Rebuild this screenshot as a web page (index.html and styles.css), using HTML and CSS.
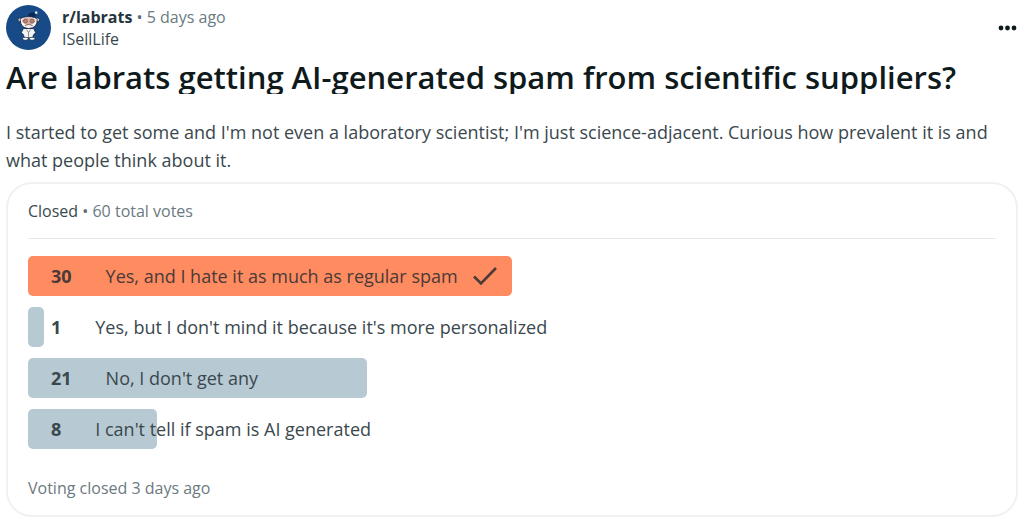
FILE: index.html
```html
<!DOCTYPE html>
<html lang="en">
<head>
<meta charset="utf-8">
<meta name="viewport" content="width=device-width, initial-scale=1">
<title>r/labrats poll</title>
<link rel="stylesheet" href="styles.css">
</head>
<body>
<article class="post">
  <header class="post-header">
    <svg class="avatar" viewBox="0 0 44 44" aria-hidden="true">
      <circle cx="22" cy="22" r="22" fill="#174a86"/>
      <path d="M21 11 C22 7 27 6 30 8 L28 12 Z" fill="#0d2a55"/>
      <circle cx="29.500" cy="7.500" r="1.300" fill="#dfe8f2"/>
      <circle cx="13.500" cy="14.500" r="1.800" fill="#d9d5d2" stroke="#14253f" stroke-width=".7"/>
      <circle cx="31" cy="14.500" r="1.800" fill="#d9d5d2" stroke="#14253f" stroke-width=".7"/>
      <path d="M17 23 L27 23 L29 27 L27 29 L26 32 L18 32 L17 29 L15 27 Z" fill="#f4f4f4" stroke="#14253f" stroke-width=".8"/>
      <ellipse cx="19" cy="33" rx="2.800" ry="1.400" fill="#fff" stroke="#14253f" stroke-width=".6"/>
      <ellipse cx="25.500" cy="33" rx="2.800" ry="1.400" fill="#fff" stroke="#14253f" stroke-width=".6"/>
      <path d="M20 24 L22 27 L24 24 M22 27 V31" fill="none" stroke="#777e88" stroke-width=".9"/>
      <path d="M14 14 Q15 11.500 22 11.500 Q29 11.500 30.500 14 Q31 22.500 22.200 23 Q13.500 22.500 14 14 Z" fill="#f5f2ef" stroke="#14253f" stroke-width=".8"/>
      <ellipse cx="22.200" cy="15.500" rx="6.600" ry="3.200" fill="#d9ada0"/>
      <circle cx="19" cy="15.800" r="1.900" fill="#c58478" stroke="#6e5a58" stroke-width=".8"/>
      <circle cx="25.500" cy="15.800" r="1.900" fill="#c58478" stroke="#6e5a58" stroke-width=".8"/>
      <path d="M18.500 20.300 Q22 18 26 20.300" fill="none" stroke="#8d6f6a" stroke-width="1"/>
    </svg>
    <div class="byline">
      <div><a class="community" href="#">r/labrats</a> <span class="dot">•</span> <time class="muted">5 days ago</time></div>
      <a class="author" href="#">ISellLife</a>
    </div>
    <button class="more" type="button" aria-label="More options">
      <svg class="more-icon" viewBox="0 0 20 20" aria-hidden="true" fill="#0f1a1c">
        <circle cx="3" cy="10" r="2.400"/><circle cx="9.500" cy="10" r="2.400"/><circle cx="16" cy="10" r="2.400"/>
      </svg>
    </button>
  </header>
  <h1 class="title">Are labrats getting AI-generated spam from scientific suppliers?</h1>
  <p class="text">I started to get some and I'm not even a laboratory scientist; I'm just science-adjacent. Curious how prevalent it is and what people think about it.</p>
  <section class="poll" aria-label="Poll results">
    <div class="poll-head">Closed <span class="dot">•</span> <span class="muted">60 total votes</span></div>
    <ul class="options">
      <li class="option">
        <span class="bar chosen" style="width:50%"></span>
        <span class="row voted"><strong>30</strong><span>Yes, and I hate it as much as regular spam</span>
          <svg class="check" viewBox="0 0 26 22" role="img" aria-label="Your vote"><path d="M2 11.500 L9 18.500 L24 3" fill="none" stroke="currentColor" stroke-width="2.600"/></svg>
        </span>
      </li>
      <li class="option">
        <span class="bar" style="width:1.7%"></span>
        <span class="row"><strong>1</strong><span>Yes, but I don't mind it because it's more personalized</span></span>
      </li>
      <li class="option">
        <span class="bar" style="width:35%"></span>
        <span class="row"><strong>21</strong><span>No, I don't get any</span></span>
      </li>
      <li class="option">
        <span class="bar" style="width:13.3%"></span>
        <span class="row"><strong>8</strong><span>I can't tell if spam is AI generated</span></span>
      </li>
    </ul>
    <p class="poll-foot">Voting closed 3 days ago</p>
  </section>
</article>
</body>
</html>
```
FILE: styles.css
```css
* { box-sizing: border-box; }
body {
  margin: 0;
  background: #fff;
  color: #3a484d;
  font: 16px/22px "Segoe UI", "Open Sans", sans-serif;
}
a { color: inherit; text-decoration: none; }
.post { padding: 5px 6px; }
.post-header { display: flex; align-items: center; gap: 11px; }
.avatar { width: 45px; height: 45px; }
.byline { flex: 1; }
.community { font-weight: 700; color: #25343a; }
.author { display: block; }
.muted { color: #6b7a80; }
.dot { color: #5c6c74; }
.more { display: flex; padding: 0; border: 0; background: none; cursor: pointer; }
.more-icon { width: 20px; height: 20px; }
.title {
  margin: 4px 0 0;
  height: 40px;
  overflow: hidden;
  font-size: 31px;
  line-height: 46px;
  font-weight: 600;
  color: #0f1a1c;
}
.text { margin: 24px 0 0; font-size: 18px; line-height: 28px; }
.poll {
  margin-top: 8px;
  padding: 16px 20px;
  border: 2px solid #f0f1f2;
  border-radius: 26px;
}
.poll-head { padding-bottom: 16px; border-bottom: 1px solid #e6e9eb; }
.options {
  display: grid;
  gap: 11px;
  margin: 17px 0 0;
  padding: 0;
  list-style: none;
  font-size: 18px;
}
.option { display: grid; align-items: center; }
.bar, .row { grid-area: 1 / 1; }
.bar { height: 40px; border-radius: 5px; background: #b7c9d3; }
.chosen { background: #ff8b60; }
.row { display: flex; align-items: center; padding-left: 23px; }
.row strong { margin-right: 34px; }
.voted { color: #4a3a38; }
.check { width: 26px; height: 22px; margin-left: 14px; }
.poll-foot { margin: 28px 0 0; color: #6b7a80; }
```
